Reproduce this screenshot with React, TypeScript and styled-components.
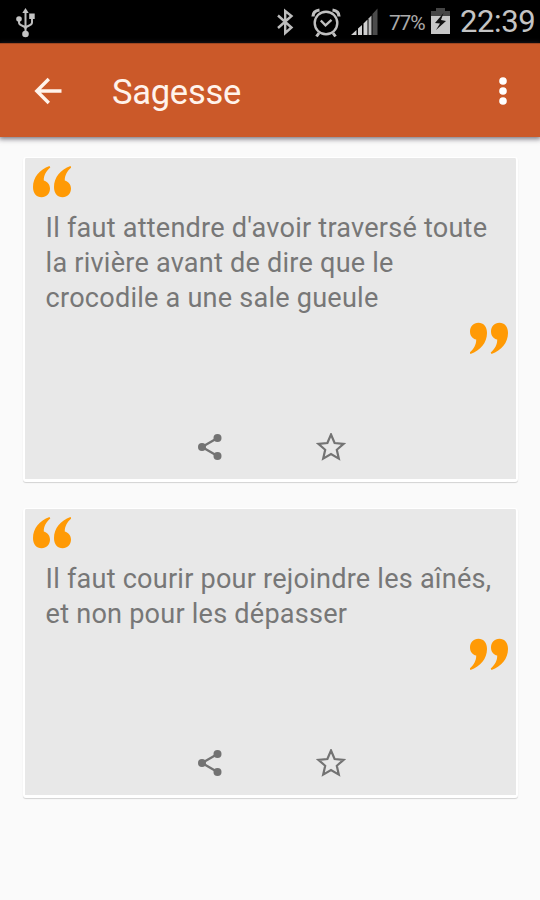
import React from "react";
import styled, { createGlobalStyle } from "styled-components";

const GlobalStyle = createGlobalStyle`
  * { box-sizing: border-box; }
  body { margin: 0; background: #fafafa; font-family: Roboto, "Noto Sans", sans-serif; }
`;

const Screen = styled.div`
  width: 540px;
  height: 900px;
  overflow: hidden;
  display: flex;
  flex-direction: column;
  background: #fafafa;
`;

const StatusBar = styled.div`
  height: 43px;
  flex: none;
  display: flex;
  align-items: flex-start;
  background: #000;
  color: #c4c4c4;
  svg { flex: none; display: block; }
`;

const UsbSlot = styled.div`
  flex: 1;
  padding: 7px 0 0 15px;
`;

const StatusIcon = styled.div<{ $top: number; $gap: number }>`
  padding-top: ${(p) => p.$top}px;
  margin-right: ${(p) => p.$gap}px;
`;

const BatteryText = styled.span`
  width: 37px;
  margin: 12px 5px 0 0;
  font-size: 21px;
  line-height: 23px;
  letter-spacing: -1.2px;
  color: #aaa;
  white-space: nowrap;
`;

const Clock = styled.span`
  width: 80px;
  margin-top: 3px;
  font-size: 31px;
  line-height: 37px;
  letter-spacing: -0.4px;
  white-space: nowrap;
`;

const AppBar = styled.header`
  height: 94px;
  flex: none;
  display: flex;
  align-items: center;
  padding: 0 32px 0 34px;
  background: #cb5929;
  border-top: 1px solid #a04822;
  box-shadow: 0 1px 5px 1px rgba(50, 45, 60, 0.65);
  z-index: 1;
  svg { display: block; }
`;

const Title = styled.h1`
  flex: 1;
  margin: 2px 0 0 50px;
  font-size: 34.5px;
  line-height: 40px;
  letter-spacing: -0.25px;
  font-weight: 400;
  color: #fff3eb;
`;

const CardList = styled.main`
  display: flex;
  flex-direction: column;
  gap: 26px;
  padding: 20px 22px 0 23px;
`;

const Card = styled.article<{ $height: number }>`
  height: ${(p) => p.$height}px;
  display: flex;
  flex-direction: column;
  background: #e8e8e8;
  border: 2px solid #fff;
  border-top-width: 1px;
  border-bottom-width: 3px;
  border-radius: 3px;
  box-shadow: 0 1px 1px rgba(0, 0, 0, 0.16);
  svg { display: block; flex: none; }
`;

const OpenRow = styled.div`
  height: 53px;
  flex: none;
  padding: 8px 0 0 8px;
`;

const Quote = styled.p`
  margin: 0 0 0 20.6px;
  font-size: 27.1px;
  line-height: 35px;
  letter-spacing: 0.22px;
  color: #777;
  white-space: pre;
`;

const CloseRow = styled.div`
  display: flex;
  justify-content: flex-end;
  padding: 6px 8px 0 0;
`;

const Actions = styled.div`
  display: flex;
  gap: 92px;
  margin-top: auto;
  padding: 0 0 18px 171px;
`;

const MARK =
  "M16.500 0C6.500 3.500 0 11.500 0 21c0 6.300 3.400 10.300 8.600 10.300 4.900 0 8.400-3.800 8.400-8.700 0-4.300-2.500-6.900-6.200-8.200C10.600 9.500 13.400 4.500 17.300 1.400Z";

const QuoteMarks = ({ closing = false }: { closing?: boolean }) => (
  <svg width="38" height="32" viewBox="0 0 38 32" fill="#ff9a05">
    <g transform={closing ? "rotate(180 19 16)" : undefined}>
      <path d={MARK} />
      <path d={MARK} transform="translate(21 0)" />
    </g>
  </svg>
);

const ShareIcon = () => (
  <svg width="28" height="28" viewBox="0 0 28 28" fill="#737373">
    <path d="M21.500 5 6 14l15.500 9" fill="none" stroke="#737373" strokeWidth="2.300" />
    <circle cx="21.500" cy="5" r="4" />
    <circle cx="6" cy="14" r="4" />
    <circle cx="21.500" cy="23" r="4" />
  </svg>
);

const StarIcon = () => (
  <svg width="30" height="28" viewBox="0 0 30 28">
    <path
      d="m15 1.500 3.600 8.500 9 .8-6.800 6 2 8.800L15 21.100l-7.800 4.500 2-8.800-6.800-6 9-.8Z"
      fill="none" stroke="#737373" strokeWidth="2.200"
    />
  </svg>
);

const UsbIcon = () => (
  <svg width="22" height="32" viewBox="0 0 22 32" fill="#c4c4c4">
    <path d="M10.500 4v23M4 12v3.500c0 4 6.500 2.500 6.500 6.500 0-4 6.500-2.500 6.500-6.500V9" fill="none" stroke="#bdbdbd" strokeWidth="2" />
    <path d="m10.500 1 3.200 5H7.300Z" />
    <circle cx="4" cy="12" r="2.800" />
    <path d="M14.200 6.500h5.500V12h-5.500z" />
    <circle cx="10.500" cy="27" r="3.300" />
  </svg>
);

const BluetoothIcon = () => (
  <svg width="17" height="28" viewBox="0 0 17 28" fill="none" stroke="#bdbdbd" strokeWidth="2.400">
    <path d="m1 7.500 13.500 12L8.200 25V3l6.300 5L1 20" />
  </svg>
);

const AlarmIcon = () => (
  <svg width="30" height="30" viewBox="0 0 30 30" fill="none" stroke="#c0c0c0">
    <circle cx="15" cy="15" r="11.300" strokeWidth="2.400" />
    <path d="m9.800 12.500 4.700 4.800 6-5.500" strokeWidth="2.400" />
    <path d="M2 8.500C2 5 4.500 2.500 8.500 2M28 8.500C28 5 25.500 2.500 21.500 2" strokeWidth="3.200" />
    <path d="m8 25-2.500 3.500M22 25l2.500 3.500" strokeWidth="3" />
  </svg>
);

const SignalIcon = () => (
  <svg width="27" height="28" viewBox="0 0 27 28">
    <path d="M0 27 5.500 22v5ZM7 20.500l4-3.500v10H7ZM12.500 15.500l4-4V27h-4Z" fill="#d0d0d0" />
    <path d="m17.500 10.500 3-3V27h-3Z" fill="#bbb" />
    <path d="m21.500 6 5-5.500V27h-5Z" fill="#4b4b4b" />
  </svg>
);

const BatteryIcon = () => (
  <svg width="20" height="28" viewBox="0 0 20 28">
    <path d="M5 1h9v3h5v7H0V4h5Z" fill="#454545" />
    <path d="M0 9h19v18H0Z" fill="#c6c6c6" />
    <path d="m12.500 6-8.500 10 5 .5L5 23l10-9-5-1Z" fill="#111" />
  </svg>
);

const BackIcon = () => (
  <svg width="28" height="28" viewBox="0 0 28 28" fill="none" stroke="#fff3eb" strokeWidth="3.400">
    <path d="M27.500 14H3M14.800 2 2.800 14l12 12" />
  </svg>
);

const MenuIcon = () => (
  <svg width="10" height="30" viewBox="0 0 10 30" fill="#fff">
    <circle cx="5" cy="5" r="3.800" />
    <circle cx="5" cy="15" r="3.800" />
    <circle cx="5" cy="25" r="3.800" />
  </svg>
);

const quotes = [
  {
    height: 325,
    text: "Il faut attendre d'avoir traversé toute\nla rivière avant de dire que le\ncrocodile a une sale gueule",
  },
  { height: 290, text: "Il faut courir pour rejoindre les aînés,\net non pour les dépasser" },
];

export default function App() {
  return (
    <>
      <GlobalStyle />
      <Screen>
        <StatusBar>
          <UsbSlot><UsbIcon /></UsbSlot>
          <StatusIcon $top={8} $gap={17}><BluetoothIcon /></StatusIcon>
          <StatusIcon $top={8} $gap={10}><AlarmIcon /></StatusIcon>
          <StatusIcon $top={8} $gap={11}><SignalIcon /></StatusIcon>
          <BatteryText>77%</BatteryText>
          <StatusIcon $top={7} $gap={9}><BatteryIcon /></StatusIcon>
          <Clock>22:39</Clock>
        </StatusBar>
        <AppBar>
          <BackIcon />
          <Title>Sagesse</Title>
          <MenuIcon />
        </AppBar>
        <CardList>
          {quotes.map((q) => (
            <Card key={q.text} $height={q.height}>
              <OpenRow><QuoteMarks /></OpenRow>
              <Quote>{q.text}</Quote>
              <CloseRow><QuoteMarks closing /></CloseRow>
              <Actions><ShareIcon /><StarIcon /></Actions>
            </Card>
          ))}
        </CardList>
      </Screen>
    </>
  );
}
